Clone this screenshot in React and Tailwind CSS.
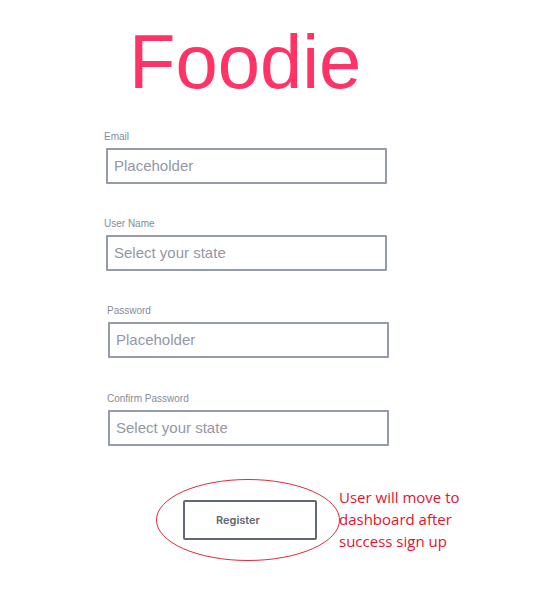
import React from 'react';

const fields = [
  { label: 'Email', placeholder: 'Placeholder', shift: 'ml-[104px]', box: 'ml-[2px]', gap: 'mt-[31px]' },
  { label: 'User Name', placeholder: 'Select your state', shift: 'ml-[104px]', box: 'ml-[2px]', gap: 'mt-[34px]' },
  { label: 'Password', placeholder: 'Placeholder', shift: 'ml-[107px]', box: 'ml-[1px]', gap: 'mt-[34px]' },
  { label: 'Confirm Password', placeholder: 'Select your state', shift: 'ml-[107px]', box: 'ml-[1px]', gap: 'mt-[35px]' },
];

const Field = ({ label, placeholder, shift, box, gap }) => (
  <div className={`${shift} ${gap} flex flex-col`}>
    <span className="text-[10px] leading-[12px] text-[#858b99]">{label}</span>
    <div className={`${box} mt-[5px] w-[281px] h-[36px] border-2 border-[#969baa] rounded-[1px] flex items-center px-[6px]`}>
      <span className="text-[15px] text-[#9398a5]">{placeholder}</span>
    </div>
  </div>
);

export default function App() {
  return (
    <div className="w-[556px] h-[610px] bg-white overflow-hidden flex flex-col" style={{ fontFamily: '"Liberation Sans", Arial, sans-serif' }}>
      {/* Title */}
      <h1 className="mt-[24px] ml-[129px] text-[76px] leading-none text-[#ff3366]">Foodie</h1>

      {/* Form */}
      <div className="flex flex-col">
        {fields.map((f) => (
          <Field key={f.label} {...f} />
        ))}
      </div>

      {/* Register + note */}
      <div className="mt-[35px] flex items-start">
        <div className="relative ml-[183px] mt-[19px]">
          <svg className="absolute left-[-28px] top-[-22px] pointer-events-none" width="186" height="84" viewBox="0 0 186 84">
            <ellipse cx="93" cy="42" rx="91.5" ry="40.5" fill="none" stroke="#e02a3a" strokeWidth="1" />
          </svg>
          <button className="w-[134px] h-[40px] border-2 border-[#626876] rounded-[2px] flex items-center justify-start pl-[31px] text-[11px] font-semibold text-[#5f6574]" style={{ fontFamily: 'Inter, sans-serif' }}>
            Register
          </button>
        </div>
        <p className="ml-[22px] mt-[5px] text-[15px] leading-[22px] text-[#e8112d]" style={{ fontFamily: '"Open Sans", sans-serif' }}>
          User will move to<br />dashboard after<br />success sign up
        </p>
      </div>
    </div>
  );
}
